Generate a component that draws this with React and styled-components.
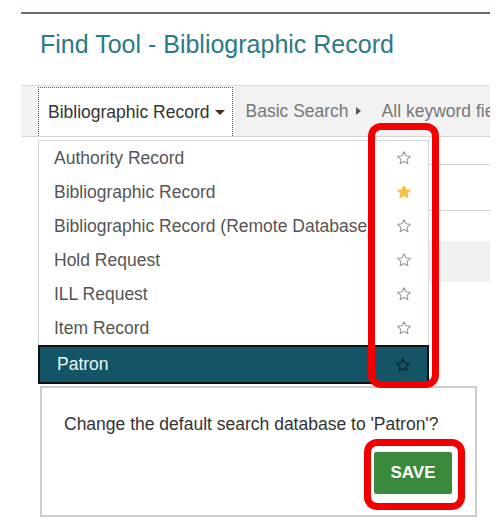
import React from "react";
import styled, { createGlobalStyle } from "styled-components";

const Global = createGlobalStyle`
  html, body { margin: 0; padding: 0; background: #fff; }
  body { font-family: "Liberation Sans", Arial, sans-serif; }
`;

const Page = styled.div`
  position: relative;
  width: 498px;
  height: 531px;
  overflow: hidden;
  padding: 12px 8px 0 21px;
  box-sizing: border-box;
`;

const Rule = styled.div`
  height: 2px;
  background: #7b6366;
`;

const Title = styled.h1`
  margin: 15px 0 0 19px;
  font-size: 25px;
  line-height: 30px;
  font-weight: 400;
  color: #2b7a85;
  white-space: nowrap;
`;

const Toolbar = styled.div`
  margin-top: 26px;
  height: 50px;
  background: #f2f2f2;
  border-top: 1px solid #dcdcdc;
  border-bottom: 1px solid #d6d6d6;
  display: flex;
  align-items: stretch;
  padding-left: 17px;
  white-space: nowrap;
  overflow: hidden;
  font-size: 17.5px;
`;

const DbButton = styled.div`
  margin-top: 1px;
  background: #fff;
  border: 1px dotted #555;
  border-bottom: none;
  display: flex;
  align-items: center;
  gap: 6px;
  padding: 0 7px 0 9px;
  color: #333;
`;

const Crumb = styled.div`
  display: flex;
  align-items: center;
  gap: 7px;
  padding-left: ${(p) => p.$pad}px;
  color: #777;
`;

const Tri = styled.span`
  display: inline-block;
  width: 0;
  height: 0;
  ${(p) =>
    p.$dir === "down"
      ? `border-left: 5px solid transparent; border-right: 5px solid transparent; border-top: 5px solid #333;`
      : `border-top: 4px solid transparent; border-bottom: 4px solid transparent; border-left: 5px solid #555;`}
`;

const Under = styled.div`
  display: flex;
  flex-direction: column;
  margin-left: 230px;
`;

const UnderRow = styled.div`
  height: ${(p) => p.$h}px;
  border-bottom: ${(p) => (p.$line ? "1px solid #d0d0d0" : "none")};
  background: ${(p) => (p.$gray ? "#f0f0f0" : "transparent")};
  box-sizing: border-box;
`;

const Tail = styled.div`
  margin: 133px 0 0 19px;
  height: 20px;
  border-left: 1px solid #cfcfcf;
`;

const Overlay = styled.div`
  position: absolute;
  left: 38px;
  top: 140px;
  display: flex;
  flex-direction: column;
`;

const Menu = styled.div`
  width: 391px;
  background: #fff;
  border-top: 1px solid #d8d8d8;
  border-left: 1px solid #cfcfcf;
  border-right: 1px solid #dcdcdc;
  box-sizing: border-box;
  display: flex;
  flex-direction: column;
`;

const Item = styled.div`
  height: ${(p) => (p.$active ? 39 : 34)}px;
  box-sizing: border-box;
  display: flex;
  align-items: center;
  justify-content: space-between;
  padding: 0 16px 0 ${(p) => (p.$active ? 17 : 15)}px;
  font-size: 17.5px;
  color: ${(p) => (p.$active ? "#eef6f8" : "#555")};
  background: ${(p) => (p.$active ? "#135566" : "#fff")};
  border: ${(p) => (p.$active ? "2px solid #111" : "none")};
  margin: ${(p) => (p.$active ? "0 -1px 0 -1px" : "0")};
  white-space: nowrap;
`;

const Popup = styled.div`
  margin: 2px 0 0 2px;
  width: 437px;
  box-sizing: border-box;
  background: #fff;
  border: 2px solid #cdcdcd;
  padding: 27px 23px 21px 22px;
  display: flex;
  flex-direction: column;
  gap: 19px;
`;

const Msg = styled.div`
  font-size: 17.5px;
  color: #333;
  line-height: 18px;
  white-space: nowrap;
`;

const SaveBtn = styled.button`
  align-self: flex-end;
  width: 78px;
  height: 42px;
  border: none;
  border-radius: 2px;
  background: #3a8a3e;
  color: #fff;
  font-family: "Liberation Sans", Arial, sans-serif;
  font-weight: 700;
  font-size: 17px;
`;

const Highlight = styled.div`
  position: absolute;
  left: ${(p) => p.$x}px;
  top: ${(p) => p.$y}px;
  width: ${(p) => p.$w}px;
  height: ${(p) => p.$h}px;
  box-sizing: border-box;
  border: 7px solid #f20000;
  border-radius: 13px;
  pointer-events: none;
`;

const Star = ({ fill, stroke }) => (
  <svg width="16" height="16" viewBox="0 0 24 24">
    <path
      d="M12 2.5l2.9 6.1 6.6.8-4.9 4.6 1.3 6.6L12 17.3l-5.9 3.3 1.3-6.6-4.9-4.6 6.6-.8z"
      fill={fill}
      stroke={stroke}
      strokeWidth="1.6"
      strokeLinejoin="round"
    />
  </svg>
);

const items = [
  { name: "Authority Record" },
  { name: "Bibliographic Record", fav: true },
  { name: "Bibliographic Record (Remote Database)" },
  { name: "Hold Request" },
  { name: "ILL Request" },
  { name: "Item Record" },
];

export default function App() {
  return (
    <>
      <Global />
      <Page>
        <Rule />
        <Title>Find Tool - Bibliographic Record</Title>
        <Toolbar>
          <DbButton>
            Bibliographic Record <Tri $dir="down" />
          </DbButton>
          <Crumb $pad={12}>
            Basic Search <Tri $dir="right" />
          </Crumb>
          <Crumb $pad={21}>All keyword fields</Crumb>
        </Toolbar>
        <Under>
          <UnderRow $h={28} $line />
          <UnderRow $h={46} $line />
          <UnderRow $h={30} />
          <UnderRow $h={41} $gray />
        </Under>
        <Tail />
        <Overlay>
          <Menu>
            {items.map((it) => (
              <Item key={it.name}>
                <span>{it.name}</span>
                {it.fav ? <Star fill="#f7c344" stroke="#f7c344" /> : <Star fill="none" stroke="#9a9a9a" />}
              </Item>
            ))}
            <Item $active>
              <span>Patron</span>
              <Star fill="none" stroke="#0b1e24" />
            </Item>
          </Menu>
          <Popup>
            <Msg>Change the default search database to 'Patron'?</Msg>
            <SaveBtn>SAVE</SaveBtn>
          </Popup>
        </Overlay>
        <Highlight $x={368} $y={123} $w={71} $h={265} />
        <Highlight $x={364} $y={439} $w={101} $h={71} />
      </Page>
    </>
  );
}
